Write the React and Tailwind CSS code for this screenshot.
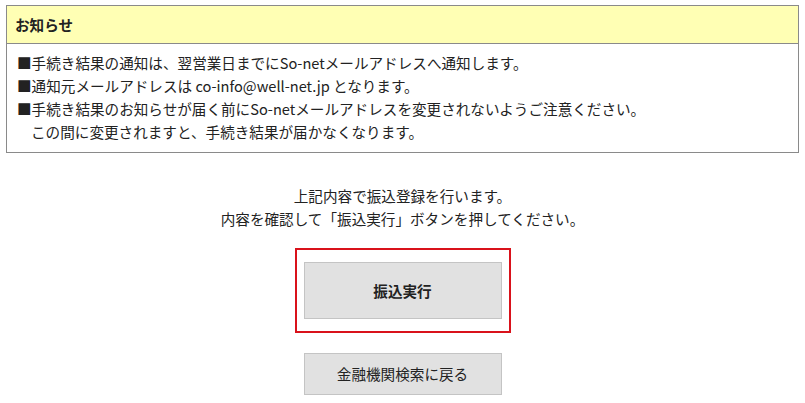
export default function App() {
  return (
    <div
      className="w-[805px] h-[403px] bg-white text-[#222] text-[14.6px] overflow-hidden"
      style={{ fontFamily: '"Noto Sans CJK JP", "Noto Sans", sans-serif' }}
    >
      <div className="pt-[5px] px-[6px]">
        {/* お知らせ */}
        <div className="border border-[#8a8a8a]">
          <div className="h-[38px] bg-[#ffffb4] border-b border-[#8a8a8a] flex items-center px-[8px] font-bold">
            お知らせ
          </div>
          <div className="pt-[7px] pb-[9px] px-[10px] leading-[23px]">
            <p>■手続き結果の通知は、翌営業日までにSo-netメールアドレスへ通知します。</p>
            <p>■通知元メールアドレスは co-info@well-net.jp となります。</p>
            <p>■手続き結果のお知らせが届く前にSo-netメールアドレスを変更されないようご注意ください。</p>
            <p className="pl-[14px]">この間に変更されますと、手続き結果が届かなくなります。</p>
          </div>
        </div>
      </div>

      <div className="mt-[31px] text-center leading-[23px]">
        <p>上記内容で振込登録を行います。</p>
        <p>内容を確認して「振込実行」ボタンを押してください。</p>
      </div>

      <div className="mt-[18px] flex flex-col items-center">
        <div className="w-[216px] h-[85px] border-2 border-[#d9121b] px-[7px] pt-[12px]">
          <button className="w-[198px] h-[57px] bg-[#e1e1e1] border border-[#c4c4c4] font-bold">
            振込実行
          </button>
        </div>
        <button className="mt-[20px] w-[198px] h-[42px] bg-[#e1e1e1] border border-[#c4c4c4]">
          金融機関検索に戻る
        </button>
      </div>
    </div>
  );
}
